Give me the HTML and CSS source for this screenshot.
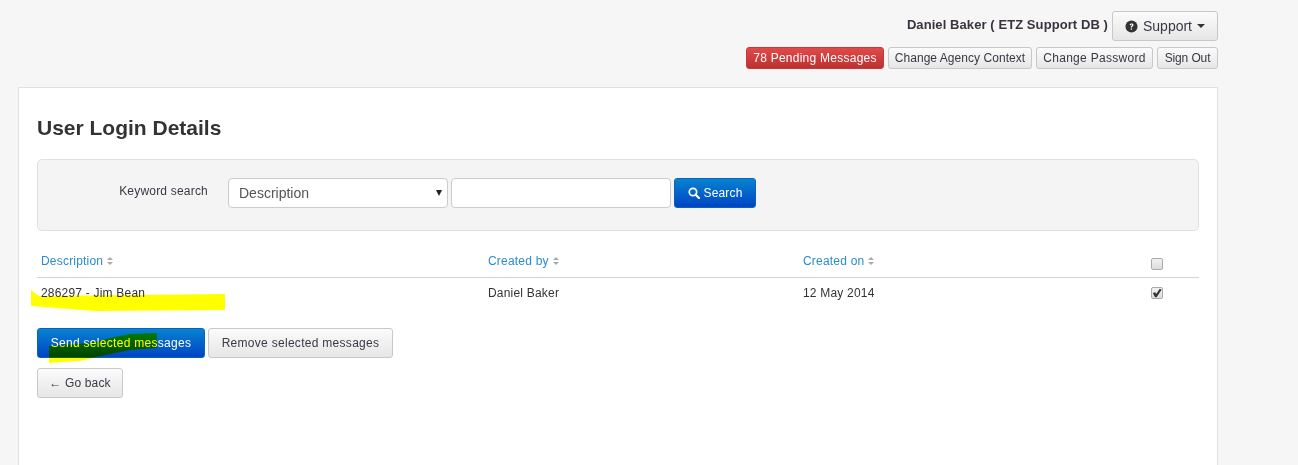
FILE: index.html
```html
<!DOCTYPE html>
<html lang="en">
<head>
<meta charset="utf-8">
<title>User Login Details</title>
<link rel="stylesheet" href="styles.css">
</head>
<body>
<header class="top">
  <div class="user-row">
    <span class="user-name">Daniel Baker ( ETZ Support DB )</span>
    <button class="btn btn-support" type="button">
      <svg class="help-icon" viewBox="0 0 14 14" width="13" height="13" aria-hidden="true"><circle cx="7" cy="7" r="6.5" fill="#333"/><path d="M4.9 5.5C5 4.3 5.9 3.7 7.1 3.7c1.2 0 2.1.7 2.1 1.7 0 .8-.4 1.2-1.1 1.6-.5.3-.6.5-.6 1H6.2c0-.9.3-1.3.9-1.7.5-.3.7-.5.7-.8 0-.4-.3-.6-.7-.6-.5 0-.8.3-.8.8z" fill="#fff"/><rect x="6.2" y="9" width="1.4" height="1.4" fill="#fff"/></svg>
      Support
      <span class="caret"></span>
    </button>
  </div>
  <div class="action-row">
    <button class="btn btn-sm btn-danger" type="button">78 Pending Messages</button>
    <button class="btn btn-sm btn-context" type="button">Change Agency Context</button>
    <button class="btn btn-sm btn-password" type="button">Change Password</button>
    <button class="btn btn-sm btn-signout" type="button">Sign Out</button>
  </div>
</header>
<main class="panel">
  <h1 class="title">User Login Details</h1>
  <form class="search-well">
    <label class="search-label">Keyword search</label>
    <div class="select-box">Description<span class="select-arrow"></span></div>
    <input class="search-input" type="text" aria-label="Keyword">
    <button class="btn btn-primary btn-search" type="button">
      <svg viewBox="0 0 14 14" width="12" height="12" aria-hidden="true"><circle cx="5.8" cy="5.8" r="4.3" fill="none" stroke="#fff" stroke-width="2"/><path d="M9 9l3.8 3.8" stroke="#fff" stroke-width="2.6" stroke-linecap="round"/></svg>
      Search
    </button>
  </form>
  <div class="table">
    <div class="row head">
      <div class="col-desc"><a class="sort">Description<span class="sort-icon"></span></a></div>
      <div class="col-by"><a class="sort">Created by<span class="sort-icon"></span></a></div>
      <div class="col-on"><a class="sort">Created on<span class="sort-icon"></span></a></div>
      <div class="col-check"><input class="check" type="checkbox" aria-label="Select all"></div>
    </div>
    <div class="row body-row">
      <div class="col-desc">286297 - Jim Bean</div>
      <div class="col-by">Daniel Baker</div>
      <div class="col-on">12 May 2014</div>
      <div class="col-check"><input class="check" type="checkbox" checked aria-label="Select row"></div>
    </div>
  </div>
  <div class="send-row">
    <button class="btn btn-primary btn-lg" type="button">Send selected messages</button>
    <button class="btn btn-lg" type="button">Remove selected messages</button>
  </div>
  <div class="back-row">
    <button class="btn btn-lg btn-back" type="button">&#8592; Go back</button>
  </div>
</main>
<svg class="marker marker-row" width="195" height="22" viewBox="0 0 195 22" aria-hidden="true"><path d="M0 0L8 6L194 4V20L64 21L39 19L0 16z" fill="#ffff00"/></svg>
<svg class="marker marker-send" width="108" height="30" viewBox="0 0 108 30" aria-hidden="true"><path d="M0 13L41 10L66 4L81 1L108 0V15L81 17L56 22L31 28L0 30z" fill="#ffff00"/></svg>
</body>
</html>
```
FILE: styles.css
```css
* { box-sizing: border-box; }
html, body { height: 100%; }
body {
  margin: 0;
  width: 1298px;
  height: 465px;
  overflow: hidden;
  position: relative;
  padding: 11px 80px 0 18px;
  background: #f6f6f6;
  color: #333;
  font: 12px/18px "Liberation Sans", Arial, sans-serif;
  letter-spacing: 0.2px;
}
.top { display: flex; flex-direction: column; align-items: flex-end; }
.user-row { display: flex; align-items: flex-start; gap: 4px; height: 30px; }
.user-name { font-weight: 700; font-size: 13px; line-height: 27px; letter-spacing: 0.08px; color: #3a3340; }
.action-row { display: flex; gap: 4px; margin-top: 6px; }
.btn {
  display: inline-flex;
  align-items: center;
  justify-content: center;
  border: 1px solid #c8c8c8;
  border-radius: 3px;
  background: linear-gradient(#fbfbfb, #e6e6e6);
  color: #3d3745;
  font: inherit;
  letter-spacing: inherit;
  padding: 0;
  white-space: nowrap;
}
.btn-support { width: 106px; height: 30px; gap: 5px; font-size: 14px; letter-spacing: 0; }
.caret { width: 0; height: 0; border-left: 4px solid transparent; border-right: 4px solid transparent; border-top: 4px solid #333; }
.btn-sm { height: 22px; padding: 0; }
.btn-danger { width: 138px; letter-spacing: 0.25px; background: linear-gradient(#e04a4a, #bd3030); border-color: #c53a3a; color: #fff; }
.btn-context { width: 144px; letter-spacing: 0.05px; }
.btn-password { width: 117px; letter-spacing: 0.3px; }
.btn-signout { width: 61px; letter-spacing: -0.12px; }
.btn-primary { background: linear-gradient(#0683d1, #0044c4); border-color: #0b62b8; color: #fff; }
.panel {
  margin-top: 18px;
  width: 1200px;
  height: 400px;
  padding: 18px;
  background: #fff;
  border: 1px solid #e2e2e2;
}
.title { margin: 10px 0 0; font-size: 21px; line-height: 24px; font-weight: 700; color: #333; letter-spacing: 0; }
.search-well {
  display: flex;
  align-items: flex-start;
  margin-top: 19px;
  height: 72px;
  padding: 18px 0 0;
  background: #f4f4f4;
  border: 1px solid #e0e0e0;
  border-radius: 5px;
}
.search-label { width: 170px; text-align: right; line-height: 26px; flex: none; color: #3d3745; }
.select-box {
  position: relative;
  flex: none;
  width: 220px;
  height: 30px;
  margin-left: 20px;
  padding-left: 10px;
  border: 1px solid #ccc;
  border-radius: 4px;
  background: #fff;
  font-size: 14px;
  line-height: 28px;
  letter-spacing: 0;
  color: #555;
}
.select-arrow {
  position: absolute;
  right: 5px;
  top: 11px;
  border-left: 3px solid transparent;
  border-right: 3px solid transparent;
  border-top: 6px solid #222;
}
.search-input {
  flex: none;
  width: 220px;
  height: 30px;
  margin: 0 0 0 3px;
  border: 1px solid #ccc;
  border-radius: 4px;
  background: #fff;
}
.btn-search { flex: none; width: 82px; height: 30px; margin-left: 3px; gap: 4px; letter-spacing: 0.15px; }
.table { margin-top: 14px; }
.row { display: flex; align-items: center; }
.head { height: 33px; border-bottom: 1px solid #d4d4d4; }
.body-row { height: 30px; }
.col-desc { width: 447px; padding-left: 4px; }
.col-by { width: 315px; padding-left: 4px; }
.col-on { width: 348px; padding-left: 4px; }
.col-check { flex: 1; display: flex; padding-left: 4px; }
.head .col-check { padding-top: 6px; }
.sort { color: #2a8ccf; display: inline-flex; align-items: center; gap: 4px; }
.sort-icon { display: inline-block; width: 6px; height: 8px; position: relative; }
.sort-icon::before, .sort-icon::after { content: ""; position: absolute; left: 0; border-left: 3px solid transparent; border-right: 3px solid transparent; }
.sort-icon::before { top: 0; border-bottom: 3px solid #aaa; }
.sort-icon::after { bottom: 0; border-top: 3px solid #aaa; }
.check {
  appearance: none;
  width: 12px;
  height: 12px;
  margin: 0;
  border: 1px solid #aaa;
  border-radius: 2px;
  background: linear-gradient(#f2f2f2, #dcdcdc);
  position: relative;
}
.check:checked::after {
  content: "";
  position: absolute;
  left: 0;
  top: 0;
  width: 10px;
  height: 10px;
  background: #333;
  clip-path: polygon(9% 50%, 32% 42%, 42% 60%, 78% 8%, 96% 18%, 46% 92%, 30% 92%);
}
.send-row { display: flex; gap: 3px; margin-top: 20px; }
.btn-lg { height: 30px; }
.send-row .btn { letter-spacing: 0.29px; }
.send-row .btn-primary { width: 168px; }
.send-row .btn:not(.btn-primary) { width: 185px; }
.back-row { margin-top: 10px; }
.btn-back { width: 86px; letter-spacing: 0.15px; }
.marker { position: absolute; mix-blend-mode: multiply; }
.marker-row { left: 31px; top: 290px; }
.marker-send { left: 49px; top: 333px; }
```
